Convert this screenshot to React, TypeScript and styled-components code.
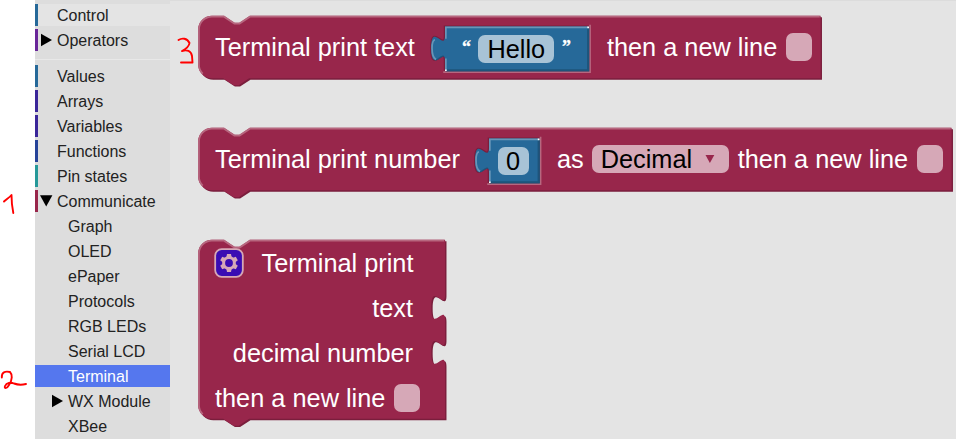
import React from 'react';
import styled, { createGlobalStyle } from 'styled-components';

const UNIT = 1.728;
const CRIMSON = '#98264b';
const CRIMSON_LIGHT = '#b7677f';
const CRIMSON_DARK = '#7a1e3c';
const BLUE = '#266999';
const BLUE_LIGHT = '#6796b8';
const BLUE_DARK = '#1e547a';

const GlobalStyle = createGlobalStyle`
  body { margin: 0; background: #fff; font-family: 'Liberation Sans', Arial, sans-serif; overflow: hidden; }
`;

const Page = styled.div`
  display: grid;
  grid-template-columns: 35px 135px 1fr;
  width: 956px;
  height: 439px;
  overflow: hidden;
`;

const Notes = styled.div`
  position: relative;
  z-index: 2;
  width: 35px;
  height: 439px;
`;

const Ink = styled.svg`
  position: absolute;
  left: 0;
  top: 0;
  overflow: visible;
  pointer-events: none;
`;

const Toolbox = styled.nav`
  display: flex;
  flex-direction: column;
  gap: 3px;
  padding-top: 4px;
  background: #ddd;
`;

const Category = styled.div<{ $bar?: string; $depth?: number; $state?: 'hover' | 'selected' }>`
  box-sizing: border-box;
  display: flex;
  align-items: center;
  flex: none;
  height: 22px;
  padding-left: ${p => (p.$depth ? 14 : 2)}px;
  border-left: ${p => (p.$bar ? `3px solid ${p.$bar}` : '0 solid')};
  background: ${p => (p.$state === 'selected' ? '#5577ee' : p.$state === 'hover' ? '#e4e4e4' : 'transparent')};
  color: ${p => (p.$state === 'selected' ? '#fff' : '#222')};
  font-size: 16px;
  line-height: 24px;
  white-space: nowrap;
`;

const ArrowSlot = styled.span<{ $nested?: boolean }>`
  display: flex;
  align-items: center;
  width: ${p => (p.$nested ? 19 : 17)}px;
  height: 22px;
`;

const CategoryName = styled.span`
  padding-top: 2px;
`;

const Separator = styled.div`
  flex: none;
  height: 1px;
  margin: 5px 0 2px;
  background: #e8e8e8;
`;

const Workspace = styled.main`
  display: flex;
  flex-direction: column;
  align-items: flex-start;
  gap: 49px;
  padding: 14px 0 0 28px;
  border-top: 1px solid #dcdcdc;
  background: #e4e4e4;
  color: #fff;
  font-size: 25.34px;
  line-height: 30px;
  white-space: pre;
`;

const Block = styled.section<{ $width: number; $height: number; $stacked?: boolean }>`
  position: relative;
  display: flex;
  box-sizing: border-box;
  flex-direction: ${p => (p.$stacked ? 'column' : 'row')};
  align-items: ${p => (p.$stacked ? 'stretch' : 'center')};
  width: ${p => p.$width}px;
  height: ${p => p.$height}px;
  padding-left: 17px;
  padding-top: ${p => (p.$stacked ? 1 : 0)}px;
`;

const Shape = styled.svg`
  position: absolute;
  left: 0;
  top: 0;
  overflow: visible;
`;

const Label = styled.span<{ $gap?: number }>`
  position: relative;
  flex: none;
  margin-left: ${p => p.$gap ?? 0}px;
`;

const Value = styled.div<{ $width: number; $gap: number; $pad: number }>`
  position: relative;
  box-sizing: border-box;
  display: flex;
  align-items: center;
  flex: none;
  width: ${p => p.$width}px;
  height: 45px;
  margin: 3px 0 0 ${p => p.$gap}px;
  padding: 1px 0 0 ${p => p.$pad}px;
`;

const Field = styled.span<{ $width: number; $tone: 'blue' | 'pink'; $gap?: number; $pad?: number }>`
  position: relative;
  box-sizing: border-box;
  display: flex;
  align-items: center;
  flex: none;
  width: ${p => p.$width}px;
  height: 28px;
  margin-left: ${p => p.$gap ?? 0}px;
  padding-left: ${p => p.$pad ?? 0}px;
  border-radius: 7px;
  background: ${p => (p.$tone === 'blue' ? '#a8c3d6' : '#d6a8b7')};
  color: #000;
  line-height: 30px;
`;

const Arrow = styled.svg`
  flex: none;
  margin-left: 13px;
`;

const Quote = styled.span<{ $gap?: number }>`
  position: relative;
  flex: none;
  width: 9px;
  height: 30px;
  margin-left: ${p => p.$gap ?? 0}px;
  font-family: 'Liberation Serif', serif;
  font-size: 18px;
  font-weight: bold;
  line-height: 26px;
  -webkit-text-stroke: 0.3px #fff;
`;

const Line = styled.div<{ $end?: boolean }>`
  position: relative;
  display: flex;
  align-items: center;
  flex: none;
  justify-content: ${p => (p.$end ? 'flex-end' : 'flex-start')};
  width: ${p => (p.$end ? 198 : 206)}px;
  height: 45px;
`;

const HeadLine = styled(Line)`
  justify-content: space-between;
  width: 198.5px;
`;

const Mutator = styled.svg`
  display: block;
  flex: none;
  margin: 0 0 0 -1px;
`;

function StatementShape({ width, height, inputs = [] }: { width: number; height: number; inputs?: number[] }) {
  const w = width / UNIT;
  const h = height / UNIT;
  const tabs = inputs.map(y => `V ${y / UNIT} v 5 c 0,10 -8,-8 -8,7.5 s 8,-2.5 8,7.5`).join(' ');
  const outline = `M 0,8 A 8,8 0 0 1 8,0 H 15 l 6,4 3,0 6,-4 H ${w} ${tabs} V ${h} H 29.5 l -6,4 -3,0 -6,-4 H 8 a 8,8 0 0 1 -8,-8 z`;
  return (
    <Shape width={width} height={height}>
      <g transform={`translate(0.1 0.8) scale(${UNIT})`}>
        <path d={outline} transform="translate(0.8 0.8)" fill={CRIMSON_DARK} />
        <path d={outline} fill={CRIMSON} />
        <path
          d={`M 2.7,${h - 2.7} A 7.5,7.5 0 0 1 0.5,${h - 8} V 8 A 7.5,7.5 0 0 1 8,0.5 H 15 l 6,4 3,0 6,-4 H ${w - 0.5}`}
          fill="none"
          stroke={CRIMSON_LIGHT}
        />
      </g>
    </Shape>
  );
}

function ValueShape({ width, height }: { width: number; height: number }) {
  const w = width / UNIT;
  const h = height / UNIT;
  const outline = `M 0,0 H ${w} V ${h} H 0 V 20 c 0,-10 -8,8 -8,-7.5 s 8,2.5 8,-7.5 z`;
  return (
    <Shape width={width} height={height}>
      <g transform={`translate(0 0.6) scale(${UNIT})`}>
        <path d={outline} fill="none" stroke={CRIMSON_DARK} strokeWidth="1.4" />
        <path d={`M -1,${h + 0.9} H ${w + 0.9} V -1`} fill="none" stroke={CRIMSON_LIGHT} />
        <path d={outline} transform="translate(0.5 0.5)" fill={BLUE_DARK} />
        <path d={outline} fill={BLUE} />
        <path d={`M ${w - 0.3},1 V ${h - 0.3} H 1`} fill="none" stroke={BLUE_DARK} />
        <path d={`M 0.5,${h - 0.5} V 18.5 M -5.2,19 C -7,18 -7.5,16 -7.5,12.5 C -7.5,9 -6.8,7.8 -5.8,7.6 M 0.5,7 V 0.5 H ${w - 0.5}`} fill="none" stroke={BLUE_LIGHT} />
        <path d={`M ${w - 0.7},0.5 h 1 M 0,${h - 0.2} h 1`} stroke="#fff" />
      </g>
    </Shape>
  );
}

type Item = { name: string; bar?: string; depth?: number; state?: 'hover' | 'selected'; arrow?: 'right' | 'down' };

const topItems: Item[] = [
  { name: 'Control', bar: '#266999', state: 'hover' },
  { name: 'Operators', bar: '#692699', arrow: 'right' },
];

const items: Item[] = [
  { name: 'Values', bar: '#266999' },
  { name: 'Arrays', bar: '#3a2699' },
  { name: 'Variables', bar: '#3a2699' },
  { name: 'Functions', bar: '#264399' },
  { name: 'Pin states', bar: '#269999' },
  { name: 'Communicate', bar: '#98264b', arrow: 'down' },
  { name: 'Graph', depth: 1 },
  { name: 'OLED', depth: 1 },
  { name: 'ePaper', depth: 1 },
  { name: 'Protocols', depth: 1 },
  { name: 'RGB LEDs', depth: 1 },
  { name: 'Serial LCD', depth: 1 },
  { name: 'Terminal', depth: 1, state: 'selected' },
  { name: 'WX Module', depth: 1, arrow: 'right' },
  { name: 'XBee', depth: 1 },
];

function CategoryRow({ name, bar, depth, state, arrow }: Item) {
  return (
    <Category $bar={bar} $depth={depth} $state={state}>
      <ArrowSlot $nested={!!depth}>
        {arrow && (
          <svg width="15" height="14" viewBox="0 0 15 14">
            <path d={arrow === 'right' ? (depth ? 'M3 0.8 L14 7 L3 13.2Z' : 'M1 0.8 L12 7 L1 13.2Z') : 'M0 1.2 H12.4 L6.2 12.6Z'} />
          </svg>
        )}
      </ArrowSlot>
      <CategoryName>{name}</CategoryName>
    </Category>
  );
}

const gearTeeth = [0, 60, 120, 180, 240, 300];

export default function App() {
  return (
    <>
      <GlobalStyle />
      <Page>
        <Notes>
          <Ink width="35" height="439" fill="none" stroke="#f00" strokeWidth="1.9" strokeLinecap="round" strokeLinejoin="round">
            <path d="M4 201.5 C6 199.5 9.5 197.5 11.5 195 C11.5 201 12 207 13.3 213" />
            <path d="M1.8 377.5 C1.5 372 5 371 10 372 C12.5 374.5 12.5 380 9 385 C6.5 389.5 4 388.5 5 386 C6.5 382.5 11 382 14 383.5 C18 385 22 385 26 384" />
            <path d="M178.5 40 C182 37.8 187 38 189.5 43 C189 47 185 49.5 182 51 C187 49.5 191 50.5 192 56 L192.5 62.5 L181 62.5" />
          </Ink>
        </Notes>
        <Toolbox>
          {topItems.map(item => <CategoryRow key={item.name} {...item} />)}
          <Separator />
          {items.map(item => <CategoryRow key={item.name} {...item} />)}
        </Toolbox>
        <Workspace>
          <Block $width={622} $height={63}>
            <StatementShape width={622.5} height={62.5} />
            <Label>Terminal print text</Label>
            <Value $width={145} $gap={30} $pad={17}>
              <ValueShape width={143.5} height={44} />
              <Quote>“</Quote>
              <Field $tone="blue" $width={76} $gap={7} $pad={9.5}>Hello</Field>
              <Quote $gap={8}>”</Quote>
            </Value>
            <Label $gap={17}>then a new line</Label>
            <Field $tone="pink" $width={26} $gap={9} />
          </Block>

          <Block $width={754} $height={63}>
            <StatementShape width={753.5} height={62.5} />
            <Label>Terminal print number</Label>
            <Value $width={51} $gap={29} $pad={9}>
              <ValueShape width={50} height={44} />
              <Field $tone="blue" $width={31} $pad={8}>0</Field>
            </Value>
            <Label $gap={17}>as</Label>
            <Field $tone="pink" $width={137} $gap={8} $pad={9}>
              Decimal
              <Arrow width="10" height="8"><path d="M0.5 0 H9.3 L4.9 8Z" fill={CRIMSON} /></Arrow>
            </Field>
            <Label $gap={9}>then a new line</Label>
            <Field $tone="pink" $width={26} $gap={9} />
          </Block>

          <Block $width={248} $height={179} $stacked>
            <StatementShape width={247} height={179} inputs={[46, 91]} />
            <HeadLine>
              <Mutator width="30" height="30" viewBox="0 0 30 30">
                <rect x="1.2" y="1.2" width="27.6" height="27.6" rx="6.5" fill="#3a0cb3" stroke="#d6a8b7" strokeWidth="1.8" />
                <g transform="translate(15 15)" fill="#d6a8b7">
                  {gearTeeth.map(a => <path key={a} d="M-2.7 -5 L-2 -9 H2 L2.7 -5Z" transform={`rotate(${a})`} />)}
                  <circle r="5.4" fill="none" stroke="#d6a8b7" strokeWidth="3" />
                </g>
              </Mutator>
              <Label>Terminal print</Label>
            </HeadLine>
            <Line $end><Label>text</Label></Line>
            <Line $end><Label>decimal number</Label></Line>
            <Line>
              <Label>then a new line</Label>
              <Field $tone="pink" $width={26} $gap={9} />
            </Line>
          </Block>
        </Workspace>
      </Page>
    </>
  );
}
